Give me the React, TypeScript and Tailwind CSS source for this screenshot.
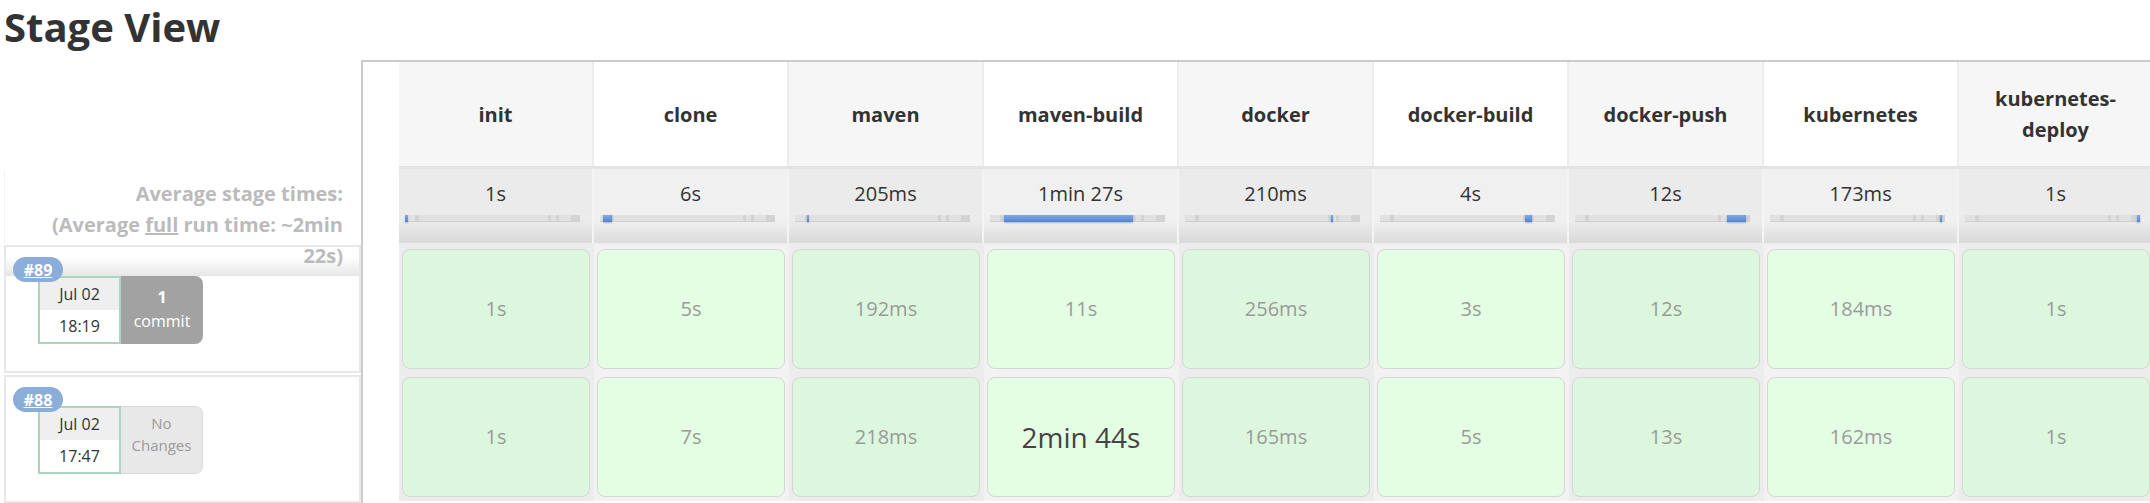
import React from "react";

type Stage = {
  name: string;
  avg: string;
  barLeft: number;
  barWidth: number;
  runs: string[];
};

const stages: Stage[] = [
  { name: "init", avg: "1s", barLeft: 0, barWidth: 3, runs: ["1s", "1s"] },
  { name: "clone", avg: "6s", barLeft: 3, barWidth: 9, runs: ["5s", "7s"] },
  { name: "maven", avg: "205ms", barLeft: 12, barWidth: 2, runs: ["192ms", "218ms"] },
  { name: "maven-build", avg: "1min 27s", barLeft: 14, barWidth: 129, runs: ["11s", "2min 44s"] },
  { name: "docker", avg: "210ms", barLeft: 146, barWidth: 2, runs: ["256ms", "165ms"] },
  { name: "docker-build", avg: "4s", barLeft: 145, barWidth: 7, runs: ["3s", "5s"] },
  { name: "docker-push", avg: "12s", barLeft: 152, barWidth: 19, runs: ["12s", "13s"] },
  { name: "kubernetes", avg: "173ms", barLeft: 170, barWidth: 2, runs: ["184ms", "162ms"] },
  { name: "kubernetes-deploy", avg: "1s", barLeft: 172, barWidth: 3, runs: ["1s", "1s"] },
];

const builds = [
  { id: "#89", date: "Jul 02", time: "18:19", commits: 1, hover: true },
  { id: "#88", date: "Jul 02", time: "17:47", commits: 0, hover: false },
];

function ProgressBar({ left, width }: { left: number; width: number }) {
  return (
    <div className="relative ml-[6px] mt-[6px] h-[7px] w-[175px] border-b border-[#cfcfcf] bg-[#e1e1e1]">
      <div className="absolute left-[10px] top-0 h-full w-[4px] bg-[#d3d3d3]" />
      <div className="absolute left-[143px] top-0 h-full w-[3px] bg-[#d3d3d3]" />
      <div className="absolute left-[151px] top-0 h-full w-[3px] bg-[#d3d3d3]" />
      <div className="absolute left-[166px] top-0 h-full w-[9px] bg-[#d3d3d3]" />
      <div
        className="absolute top-0 h-[7px] bg-[linear-gradient(#82a9e3,#5483d0)] shadow-[0_1px_2px_rgba(60,100,170,0.4)]"
        style={{ left, width }}
      />
    </div>
  );
}

function BuildRow({ build }: { build: (typeof builds)[number] }) {
  return (
    <div className="relative mb-[2px] h-[128px] border-2 border-[#e8e8e8] bg-white">
      {build.hover ? (
        <div className="h-[29px] bg-[linear-gradient(to_bottom,#ffffff_35%,#e6e6e6)]" />
      ) : (
        <div className="h-[29px]" />
      )}
      <div className="ml-[32px] flex">
        <div className="w-[83px] border-2 border-[#a9d6c0] text-[16px] text-[#333]">
          <div className="flex h-[32px] items-center justify-center bg-[#efefef]">{build.date}</div>
          <div className="flex h-[32px] items-center justify-center bg-white">{build.time}</div>
        </div>
        {build.commits > 0 ? (
          <div className="h-[68px] w-[82px] rounded-r-[8px] bg-[#a2a2a2] pt-[9px] text-center text-[16px] leading-[24px] text-white">
            <div className="font-bold">{build.commits}</div>
            <div>commit</div>
          </div>
        ) : (
          <div className="h-[68px] w-[82px] rounded-r-[8px] border border-l-0 border-[#dadada] bg-[#e8e8e8] pt-[5px] text-center text-[15px] leading-[22px] text-[#9a9a9a]">
            <div>No</div>
            <div>Changes</div>
          </div>
        )}
      </div>
      <span className="absolute left-[7px] top-[10px] z-10 flex h-[25px] w-[50px] items-center justify-center rounded-full bg-[#8badd9] text-[16px] font-bold text-white underline">
        {build.id}
      </span>
    </div>
  );
}

export default function App() {
  return (
    <div className="h-[503px] w-[2150px] overflow-hidden bg-white font-['Open_Sans',sans-serif] text-[#333]">
      <h2 className="h-[60px] pl-[4px] text-[40px] font-bold leading-[54px] text-[#333]">Stage View</h2>

      <div className="flex">
        {/* left panel: average label + builds */}
        <div className="w-[361px] shrink-0 pl-[4px]">
          <div className="h-[110px]" />
          <div className="relative z-10 h-[75px] border-l border-[#f4f4f4] pt-[8px] pr-[18px] text-right text-[20px] font-bold leading-[31px] text-[#bbbbbb]">
            <div>Average stage times:</div>
            <div>
              (Average <span className="underline">full</span> run time: ~2min
              <br />
              22s)
            </div>
          </div>
          {builds.map((b) => (
            <BuildRow key={b.id} build={b} />
          ))}
        </div>

        {/* stage table */}
        <div className="flex shrink-0 border-l-2 border-t-2 border-[#cbcbcb]">
          <div className="w-[36px] shrink-0 bg-white" />
          <div className="flex flex-col">
            <div className="flex h-[107px] border-b-[3px] border-[#e3e3e3]">
              {stages.map((s, i) => (
                <div
                  key={s.name}
                  className={`flex w-[195px] shrink-0 items-center justify-center border-r-2 border-[#ececec] px-[20px] text-center text-[20px] font-bold leading-[31px] text-[#333] ${
                    i % 2 === 0 ? "bg-[#f6f6f6]" : "bg-white"
                  }`}
                >
                  {s.name}
                </div>
              ))}
            </div>

            <div className="flex h-[76px] border-b-2 border-[#ececec]">
              {stages.map((s, i) => (
                <div
                  key={s.name}
                  className={`w-[195px] shrink-0 border-r-2 border-[#f4f4f4] pt-[10px] ${
                    i % 2 === 0
                      ? "bg-[linear-gradient(to_bottom,#ebebeb_70%,#d9d9d9)]"
                      : "bg-[linear-gradient(to_bottom,#f0f0f0_70%,#dcdcdc)]"
                  }`}
                >
                  <div className="text-center text-[20px] leading-[30px] text-[#333]">{s.avg}</div>
                  <ProgressBar left={s.barLeft} width={s.barWidth} />
                </div>
              ))}
            </div>

            {[0, 1].map((r) => (
              <div key={r} className="flex h-[128px]">
                {stages.map((s, i) => (
                  <div
                    key={s.name}
                    className={`w-[195px] shrink-0 py-[4px] pl-[3px] pr-[4px] ${
                      i % 2 === 0 ? "bg-[#ececec]" : "bg-[#f2f2f2]"
                    }`}
                  >
                    <div
                      className={`flex h-[120px] items-center justify-center rounded-[8px] border border-[#d6d6d6] ${
                        i % 2 === 0 ? "bg-[#ddf7de]" : "bg-[#e4fee4]"
                      } ${
                        s.runs[r] === "2min 44s"
                          ? "text-[28px] text-[#444]"
                          : "text-[20px] text-[#9a9a9a]"
                      }`}
                    >
                      {s.runs[r]}
                    </div>
                  </div>
                ))}
              </div>
            ))}
          </div>
        </div>
      </div>
    </div>
  );
}
